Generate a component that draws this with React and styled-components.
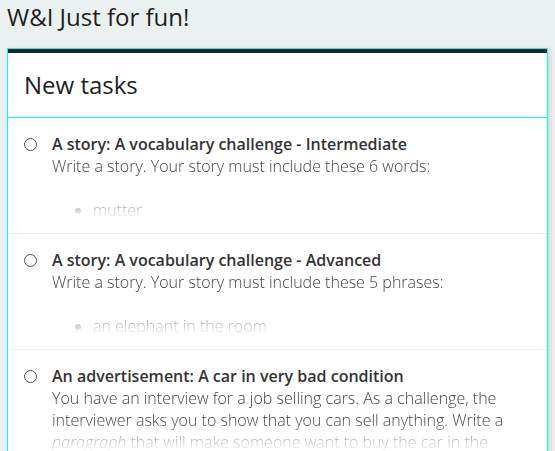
import * as React from 'react';
import styled, { createGlobalStyle } from 'styled-components';

const GlobalStyle = createGlobalStyle`
  html, body {
    margin: 0;
    padding: 0;
    background: #ebf0f0;
    font-family: 'Open Sans', 'Liberation Sans', sans-serif;
    color: #333;
    overflow: hidden;
  }
`;

const Page = styled.div`
  padding: 0 7px;
  height: 451px;
`;

const PageTitle = styled.h1`
  margin: 0;
  padding-top: 1px;
  font-size: 24px;
  line-height: 32px;
  font-weight: 500;
  color: #1e1e1e;
`;

const Card = styled.section`
  margin-top: 15px;
  background: #fff;
  border: 1px solid #00ffff;
  box-shadow: 2px 2px 6px rgba(0, 0, 0, 0.12);
`;

const CardHeader = styled.header`
  border-top: 4px solid #232323;
  border-bottom: 1px solid #00ffff;
  padding: 16px 16px;
`;

const CardTitle = styled.h2`
  margin: 0;
  font-size: 24px;
  line-height: 32px;
  font-weight: 500;
  color: #1e1e1e;
`;

const TaskList = styled.ul`
  list-style: none;
  margin: 0;
  padding: 0;
`;

const TaskRow = styled.li`
  display: flex;
  gap: 15px;
  padding: 15px 16px 12px;
  border-bottom: 1px solid #eeeeee;
`;

const Radio = styled.span`
  flex: none;
  width: 13px;
  height: 13px;
  margin-top: 5px;
  border: 1.4px solid #555;
  border-radius: 50%;
  box-sizing: border-box;
`;

const TaskBody = styled.div`
  min-width: 0;
`;

const TaskTitle = styled.div`
  font-size: 16px;
  line-height: 22px;
  font-weight: 600;
  color: #333;
`;

const TaskText = styled.div`
  max-height: 66px;
  overflow: hidden;
  font-size: 16px;
  line-height: 22px;
  font-weight: 300;
  color: #444;
  -webkit-mask-image: linear-gradient(to bottom, #000 34px, rgba(0, 0, 0, 0.15) 60px, transparent 66px);
  mask-image: linear-gradient(to bottom, #000 34px, rgba(0, 0, 0, 0.15) 60px, transparent 66px);

  p {
    margin: 0 0 22px;
  }

  ul {
    margin: 0;
    padding-left: 41px;
    list-style: disc;
  }

  li::marker {
    color: #777;
  }
`;

const tasks = [
  {
    title: 'A story: A vocabulary challenge - Intermediate',
    text: <p>Write a story. Your story must include these 6 words:</p>,
    words: ['mutter', 'glance', 'stumble', 'whisper', 'grin', 'wander'],
  },
  {
    title: 'A story: A vocabulary challenge - Advanced',
    text: <p>Write a story. Your story must include these 5 phrases:</p>,
    words: ['an elephant in the room', 'once in a blue moon', 'break the ice'],
  },
  {
    title: 'An advertisement: A car in very bad condition',
    text: (
      <p>
        You have an interview for a job selling cars. As a challenge, the interviewer asks you to
        show that you can sell anything. Write a <em>paragraph</em> that will make someone want to
        buy the car in the picture.
      </p>
    ),
    words: [],
  },
];

const App = () => (
  <Page>
    <GlobalStyle />
    <PageTitle>W&amp;I Just for fun!</PageTitle>
    <Card>
      <CardHeader>
        <CardTitle>New tasks</CardTitle>
      </CardHeader>
      <TaskList>
        {tasks.map(task => (
          <TaskRow key={task.title}>
            <Radio />
            <TaskBody>
              <TaskTitle>{task.title}</TaskTitle>
              <TaskText>
                {task.text}
                {task.words.length > 0 && (
                  <ul>
                    {task.words.map(w => <li key={w}>{w}</li>)}
                  </ul>
                )}
              </TaskText>
            </TaskBody>
          </TaskRow>
        ))}
      </TaskList>
    </Card>
  </Page>
);

export default App;
